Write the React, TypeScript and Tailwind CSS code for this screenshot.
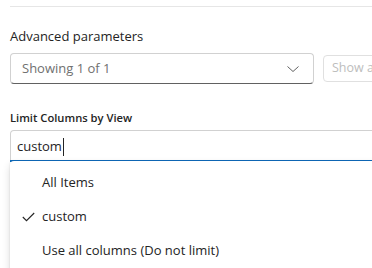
export default function App() {
  const font = { fontFamily: '"Open Sans", sans-serif' };
  return (
    <div className="w-[372px] h-[268px] overflow-hidden bg-white relative text-[#242424]" style={font}>
      <div className="pl-[10px] pt-[6px] w-[420px]">
        <div className="h-px bg-[#e6e6e6]" />
        <div className="mt-[20px] text-[13px] leading-[18px]">Advanced parameters</div>
        <div className="mt-[8px] flex items-center">
          <div className="shrink-0 w-[304px] h-[31px] rounded-[4px] border border-[#d1d1d1] border-b-[#616161] flex items-center justify-between pl-[11px] pr-[14px]">
            <span className="text-[13px] text-[#707070]">Showing 1 of 1</span>
            <svg width="12" height="8" viewBox="0 0 12 8" fill="none">
              <path d="M0.5 1.5 L6 6.5 L11.5 1.5" stroke="#616161" strokeWidth="1" />
            </svg>
          </div>
          <div className="shrink-0 ml-[9px] h-[27px] rounded-[4px] border border-[#e0e0e0] pl-[8px] pr-[20px] flex items-center text-[12.5px] text-[#bdbdbd] whitespace-nowrap">
            Show all
          </div>
        </div>
        <div className="mt-[27px] text-[11.2px] font-semibold leading-[14px]">Limit Columns by View</div>
        <div className="mt-[5px] h-[32px] rounded-t-[4px] border border-[#d1d1d1] border-b-0 relative flex items-center pl-[6px]">
          <span className="text-[13px]">custom</span>
          <span className="ml-px w-px h-[18px] bg-[#242424]" />
          <div className="absolute left-[-1px] right-0 bottom-0 h-[2px] bg-[#0f6cbd]" />
        </div>
      </div>
      <div className="absolute left-[10px] top-[161px] w-[400px] h-[120px] bg-white rounded-[4px] shadow-[0_0_2px_rgba(0,0,0,0.12),0_4px_8px_rgba(0,0,0,0.14)] pt-[5px]">
        <div className="h-[34px] flex items-center pl-[32px] text-[13px]">All Items</div>
        <div className="h-[34px] flex items-center text-[13px] relative pl-[32px]">
          <svg className="absolute left-[12px] top-[12px]" width="13" height="10" viewBox="0 0 13 10" fill="none">
            <path d="M0.8 5 L4.5 8.7 L12.2 1" stroke="#242424" strokeWidth="1.1" />
          </svg>
          custom
        </div>
        <div className="h-[34px] flex items-center pl-[32px] text-[13px]">Use all columns (Do not limit)</div>
      </div>
    </div>
  );
}
